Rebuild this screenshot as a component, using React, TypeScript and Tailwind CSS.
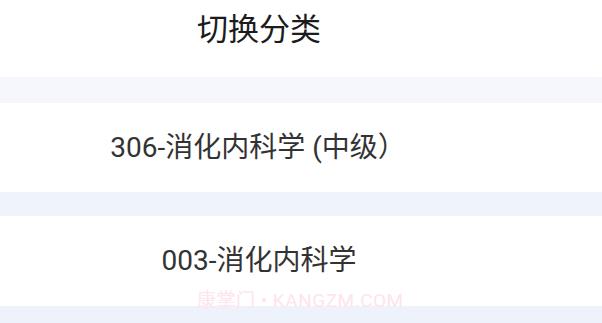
import React from 'react';

const ROWS = ['306-消化内科学 (中级）', '003-消化内科学'];

export default function App() {
  return (
    <div
      className="flex h-[323px] w-[602px] flex-col overflow-hidden bg-[#f5f7fc]"
      style={{ fontFamily: 'Roboto, "Noto Sans CJK SC", sans-serif' }}
    >
      <div className="flex h-[77px] shrink-0 justify-center bg-white pr-[84px] pt-[14px] text-[31px] leading-none text-[#1c1c1c]">
        切换分类
      </div>
      <div className="h-[26px] shrink-0" />
      <div className="flex h-[89px] shrink-0 items-center justify-center bg-white pr-[86px] text-[28px] text-[#333]">
        {ROWS[0]}
      </div>
      <div className="h-[24px] shrink-0 bg-[#eff4fb]" />
      <div className="relative flex h-[90px] shrink-0 items-center justify-center bg-white pr-[84px] text-[28px] text-[#333]">
        {ROWS[1]}
        <span className="absolute left-[197px] top-[75px] whitespace-nowrap text-[19px] leading-none tracking-[0.5px] text-[#fde4ef]">
          康掌门 • KANGZM.COM
        </span>
      </div>
      <div className="h-[17px] shrink-0 bg-[#eef3fb]" />
    </div>
  );
}
